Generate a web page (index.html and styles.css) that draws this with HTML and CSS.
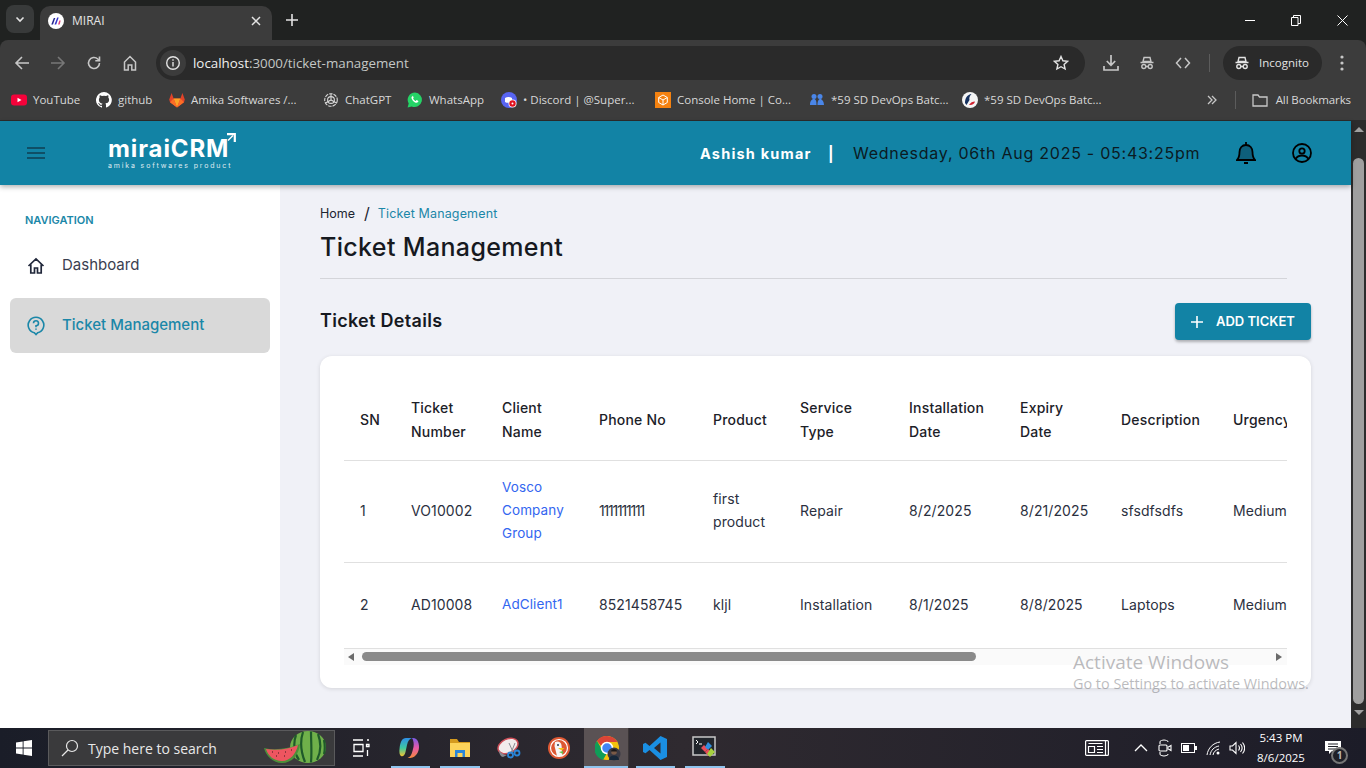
FILE: index.html
```html
<!DOCTYPE html>
<html lang="en">
<head>
    <meta charset="UTF-8">
    <meta name="viewport" content="width=device-width, initial-scale=1.0">
    <title>MIRAI</title>
    <link rel="stylesheet" href="styles.css">
</head>
<body>
    <!-- Browser: tab strip -->
    <div class="tabstrip">
        <div class="tab-search"><svg width="12" height="12" viewBox="0 0 12 12" fill="none" stroke="#e3e3e3" stroke-width="1.6"><path d="M2.5 4.5 6 8l3.500-3.500"/></svg></div>
        <div class="tab">
            <span class="favicon"><svg width="16" height="16" viewBox="0 0 16 16"><circle cx="8" cy="8" r="8" fill="#fff"/><path d="M3.300 11.500 5.800 5h1.500L5 11.500z" fill="#23238f"/><path d="M6.500 11.500 9.200 4.500h1.500L8.200 11.500z" fill="#3535c8"/><path d="M10 11.500l1.300-4h1.400l-1 4z" fill="#e2447a"/></svg></span>
            <span class="tab-title">MIRAI</span>
            <svg class="tab-close" width="10" height="10" viewBox="0 0 10 10" stroke="#e3e3e3" stroke-width="1.5"><path d="m1 1 8 8M9 1 1 9"/></svg>
        </div>
        <svg class="tab-new" width="12" height="12" viewBox="0 0 12 12" stroke="#e3e3e3" stroke-width="1.600"><path d="M6 0v12M0 6h12"/></svg>
        <div class="win-controls">
            <svg width="10" height="10" viewBox="0 0 10 10" stroke="#fff"><path d="M0 5.500h10"/></svg>
            <svg width="10" height="11" viewBox="0 0 10 11" fill="none" stroke="#fff"><path d="M.5 2.500h6.500v8H.5zM2.500 2.500V.5h7v8H7"/></svg>
            <svg width="11" height="11" viewBox="0 0 11 11" stroke="#fff"><path d="m.5.500 10 10M10.500.5l-10 10"/></svg>
        </div>
    </div>

    <!-- Browser: toolbar -->
    <div class="toolbar">
        <svg class="nav-icon" width="16" height="16" viewBox="0 0 16 16" fill="none" stroke="#c7c7c7" stroke-width="1.600"><path d="M15 8H2M8 2 2 8l6 6"/></svg>
        <svg class="nav-icon" width="16" height="16" viewBox="0 0 16 16" fill="none" stroke="#777" stroke-width="1.600"><path d="M1 8h13M8 2l6 6-6 6"/></svg>
        <svg class="nav-icon" width="16" height="16" viewBox="0 0 16 16" fill="none" stroke="#c7c7c7" stroke-width="1.600"><path d="M13.500 8A5.500 5.500 0 1 1 11.800 4l1.700 1.700"/><path d="M13.500 1.500v4.200H9.300"/></svg>
        <svg class="nav-icon" width="16" height="16" viewBox="0 0 16 16" fill="none" stroke="#c7c7c7" stroke-width="1.500"><path d="M2.500 15V7L8 1.500 13.500 7v8h-3.700v-5H6.200v5z"/></svg>
        <div class="omnibox">
            <span class="site-info"><svg width="16" height="16" viewBox="0 0 16 16" fill="none" stroke="#e3e3e3" stroke-width="1.400"><circle cx="8" cy="8" r="6.300"/><path d="M8 7v4.500M8 4.300v1.400"/></svg></span>
            <span class="url"><b>localhost</b>:3000/ticket-management</span>
            <svg class="star" width="16" height="16" viewBox="0 0 16 16" fill="none" stroke="#e3e3e3" stroke-width="1.400"><path d="m8 1.500 1.900 4.300 4.700.5-3.500 3.100 1 4.600L8 11.700l-4.100 2.300 1-4.600L1.400 6.300l4.700-.5z"/></svg>
        </div>
        <svg class="tool-icon" width="16" height="16" viewBox="0 0 16 16" fill="none" stroke="#c7c7c7" stroke-width="1.700"><path d="M8 0v10M3.800 6 8 10.300 12.200 6M1 11v4h14v-4"/></svg>
        <svg class="tool-icon" width="16" height="16" viewBox="0 0 16 16" fill="none" stroke="#c7c7c7" stroke-width="1.400"><path d="M5 2.500h6l1 4H4zM1.500 7.500h13"/><circle cx="4.800" cy="11.500" r="2"/><circle cx="11.200" cy="11.500" r="2"/><path d="M6.800 11.500h2.400"/></svg>
        <svg class="tool-icon code-icon" width="16" height="16" viewBox="0 0 16 16" fill="none" stroke="#c7c7c7" stroke-width="1.500"><path d="M6 3 1.500 8 6 13M10 3l4.500 5-4.500 5"/></svg>
        <span class="tool-sep"></span>
        <div class="incognito">
            <svg width="16" height="16" viewBox="0 0 16 16" fill="none" stroke="#e3e3e3" stroke-width="1.400"><path d="M5 2.500h6l1 4H4zM1.500 7.500h13"/><circle cx="4.800" cy="11.500" r="2"/><circle cx="11.200" cy="11.500" r="2"/><path d="M6.800 11.500h2.400"/></svg>
            <span>Incognito</span>
        </div>
        <svg class="menu-dots" width="4" height="16" viewBox="0 0 4 16" fill="#c7c7c7"><circle cx="2" cy="2" r="1.600"/><circle cx="2" cy="8" r="1.600"/><circle cx="2" cy="14" r="1.600"/></svg>
    </div>

    <!-- Browser: bookmarks -->
    <div class="bookmarks">
        <div class="bm-list">
            <div class="bm"><svg width="16" height="16" viewBox="0 0 16 16"><rect y="2.500" width="16" height="11" rx="3" fill="#f5023a"/><path d="m6.500 5.700 4 2.300-4 2.300z" fill="#fff"/></svg>YouTube</div>
            <div class="bm"><svg width="16" height="16" viewBox="0 0 16 16"><path fill="#fff" d="M8 0a8 8 0 0 0-2.500 15.600c.4.100.5-.2.500-.4v-1.400c-2.200.5-2.700-1-2.700-1-.4-.9-.9-1.200-.9-1.200-.7-.5.100-.5.100-.5.800.1 1.200.8 1.200.8.700 1.200 1.900.9 2.300.7.100-.5.300-.9.500-1.100-1.800-.2-3.600-.9-3.600-4 0-.9.300-1.600.8-2.100-.1-.2-.4-1 .1-2.100 0 0 .7-.2 2.200.8a7.600 7.600 0 0 1 4 0c1.500-1 2.200-.8 2.200-.8.400 1.100.2 1.900.1 2.100.5.600.8 1.300.8 2.100 0 3.100-1.900 3.700-3.700 3.900.3.300.6.800.6 1.500v2.200c0 .2.100.5.600.4A8 8 0 0 0 8 0z"/></svg>github</div>
            <div class="bm"><svg width="16" height="16" viewBox="0 0 16 16"><path fill="#e24329" d="M8 15.500 1 10.200.2 7.500 2.600 1l2 5.500h6.800l2-5.500 2.400 6.500-.8 2.700z"/><path fill="#fca326" d="M8 15.500 4.600 6.500h6.800z"/><path fill="#fc6d26" d="m8 15.500-7-5.300 3.600-3.700zM8 15.500l7-5.300-3.600-3.700z"/></svg>Amika Softwares /...</div>
            <div class="bm"><svg width="16" height="16" viewBox="0 0 16 16" fill="none" stroke="#d8d8d8" stroke-width="1.100"><circle cx="8" cy="8" r="6.300" stroke-dasharray="3.500 1"/><circle cx="8" cy="8" r="3.400"/><path d="M8 1.700v6.300M2.500 11 8 8l5.500 3"/></svg>ChatGPT</div>
            <div class="bm"><svg width="16" height="16" viewBox="0 0 16 16"><path fill="#25d366" d="M8 .5a7.300 7.300 0 0 0-6.300 11L.6 15.500l4.100-1A7.300 7.300 0 1 0 8 .5z"/><path fill="#fff" d="M5.600 4.200c-.3 0-.8.300-1 .9-.3.800 0 2 1.100 3.300 1.200 1.400 2.700 2.300 3.900 2.400.9 0 1.600-.6 1.700-1.200.1-.4.100-.6 0-.7l-1.500-.8c-.2 0-.3 0-.4.100l-.6.700c-.1.100-.2.100-.4 0-.9-.4-1.800-1.200-2.300-2.100-.1-.2 0-.3.100-.4l.4-.6v-.4l-.6-1.400c-.1-.2-.3-.3-.4-.3z"/></svg>WhatsApp</div>
            <div class="bm"><svg width="16" height="16" viewBox="0 0 16 16"><circle cx="8" cy="8" r="8" fill="#5865f2"/><path d="M4 6c2-1.500 5-1.500 7 0v4l-1.500.8H5.500L4 10z" fill="#fff"/><circle cx="11.500" cy="11.500" r="4" fill="#fff"/><circle cx="11.500" cy="11.500" r="3.200" fill="#e0101f"/><circle cx="11.500" cy="11.500" r="1" fill="#fff"/></svg>• Discord | @Super...</div>
            <div class="bm"><svg width="16" height="16" viewBox="0 0 16 16"><rect width="16" height="16" fill="#f58210"/><path d="m8 3 4.300 2.500v5L8 13l-4.300-2.500v-5zM3.700 5.500 8 8l4.300-2.500M8 8v5" fill="none" stroke="#fff" stroke-width="1"/></svg>Console Home | Co...</div>
            <div class="bm"><svg width="16" height="16" viewBox="0 0 16 16" fill="#4a86e8"><circle cx="5" cy="4.500" r="2.500"/><circle cx="11" cy="4.500" r="2.500"/><path d="M1 13c0-3.500 1.500-6 3.800-6S7.500 9.500 7.500 13zM8.500 13c0-3.500 1-6 2.700-6S15 9.500 15 13z"/></svg>*59 SD DevOps Batc...</div>
            <div class="bm"><svg width="16" height="16" viewBox="0 0 16 16"><circle cx="8" cy="8" r="8" fill="#f4f4f4"/><path d="M3 11c0-5 2.500-8.500 6.500-9-2 2-2.500 4-2 6L4.500 13z" fill="#15305e"/><path d="M7 13c1.500-2.500 3.500-3.500 6-3.500-.5 2.500-3 4-6 3.500z" fill="#d0202e"/></svg>*59 SD DevOps Batc...</div>
        </div>
        <svg class="bm-more" width="10" height="10" viewBox="0 0 10 10" fill="none" stroke="#c7c7c7" stroke-width="1.300"><path d="m1 1 4 4-4 4M5 1l4 4-4 4"/></svg>
        <span class="tool-sep bm-sep"></span>
        <div class="bm-all"><svg width="16" height="16" viewBox="0 0 16 16" fill="none" stroke="#c7c7c7" stroke-width="1.300"><path d="M1 3h5l1.500 2H15v9H1z"/></svg>All Bookmarks</div>
    </div>

    <!-- Page -->
    <div class="viewport">
        <div class="app">
            <header class="app-header">
                <svg class="burger" width="18" height="12" viewBox="0 0 18 12" stroke="#0f3f52" stroke-width="1.600"><path d="M0 1h18M0 6h18M0 11h18"/></svg>
                <div class="logo">
                    <div class="logo-name">miraiCRM<svg class="logo-arrow" width="12" height="11" viewBox="0 0 12 11" fill="none" stroke="#fff"><path d="M3 1.200h7.800V9" stroke-width="2.200"/><path d="M4 7.500 9 2.500" stroke-width="1.500"/></svg></div>
                    <div class="logo-sub">amika softwares product</div>
                </div>
                <div class="user-name">Ashish kumar</div>
                <div class="user-sep">|</div>
                <div class="clock">Wednesday, 06th Aug 2025 - 05:43:25pm</div>
                <svg class="bell" width="20" height="24" viewBox="0 0 20 24" fill="#0e5f7b" stroke="#000" stroke-width="1.800"><path d="M1 19h18c-2-2-2.500-3.500-2.500-8 0-4-2.500-7-6.500-7s-6.500 3-6.500 7c0 4.500-.5 6-2.500 8z"/><path d="M10 1v3" /><path d="M8 22h4" stroke-width="2"/></svg>
                <svg class="account" width="20" height="20" viewBox="0 0 20 20" fill="none" stroke="#000" stroke-width="1.800"><circle cx="10" cy="10" r="9"/><circle cx="10" cy="8" r="2.700"/><path d="M3.500 16c1.500-2.500 3.800-3.500 6.500-3.500s5 1 6.500 3.500"/></svg>
            </header>

            <div class="app-body">
                <aside class="sidebar">
                    <div class="nav-title">NAVIGATION</div>
                    <div class="nav-item">
                        <svg width="18" height="18" viewBox="0 0 18 18" fill="none" stroke="#20273a" stroke-width="1.700"><path d="M1.500 9 9 2l7.500 7M3.800 7.500V16h3.700v-5h3v5h3.700V7.500"/></svg>
                        <span>Dashboard</span>
                    </div>
                    <div class="nav-item active">
                        <svg width="18" height="20" viewBox="0 0 18 20" fill="none" stroke="#1b87a8" stroke-width="1.600"><path d="M9 18.500 7.300 16.700A7.800 7.800 0 1 1 10.700 16.700z"/><path d="M6.500 7.200A2.500 2.500 0 1 1 9 9.800v1.400M9 12.500v1.300"/></svg>
                        <span>Ticket Management</span>
                    </div>
                </aside>

                <main class="content">
                    <div class="breadcrumb">
                        <span>Home</span>
                        <span class="crumb-sep">/</span>
                        <span class="crumb-current">Ticket Management</span>
                    </div>
                    <h1 class="page-title">Ticket Management</h1>
                    <div class="section-head">
                        <h2>Ticket Details</h2>
                        <button class="add-btn">
                            <svg width="12" height="12" viewBox="0 0 12 12" stroke="#fff" stroke-width="1.600"><path d="M6 0v12M0 6h12"/></svg>
                            <span>ADD TICKET</span>
                        </button>
                    </div>
                    <div class="card">
                        <div class="table-wrap">
                            <table class="tickets">
                                <colgroup>
                                    <col class="c-sn"><col class="c-num"><col class="c-client"><col class="c-phone"><col class="c-product">
                                    <col class="c-service"><col class="c-install"><col class="c-expiry"><col class="c-desc"><col class="c-urgency">
                                </colgroup>
                                <thead>
                                    <tr>
                                        <th>SN</th><th>Ticket Number</th><th>Client Name</th><th>Phone No</th><th>Product</th>
                                        <th>Service Type</th><th>Installation Date</th><th>Expiry Date</th><th>Description</th><th>Urgency</th>
                                    </tr>
                                </thead>
                                <tbody>
                                    <tr class="row-a">
                                        <td>1</td><td>VO10002</td><td><a class="client-link">Vosco Company Group</a></td><td class="ones">1111111111</td><td>first product</td>
                                        <td>Repair</td><td>8/2/2025</td><td>8/21/2025</td><td>sfsdfsdfs</td><td>Medium</td>
                                    </tr>
                                    <tr class="row-b">
                                        <td>2</td><td>AD10008</td><td><a class="client-link">AdClient1</a></td><td>8521458745</td><td>kljl</td>
                                        <td>Installation</td><td>8/1/2025</td><td>8/8/2025</td><td>Laptops</td><td>Medium</td>
                                    </tr>
                                </tbody>
                            </table>
                            <div class="hscroll">
                                <span class="arrow-left"></span>
                                <div class="hscroll-track"><div class="hscroll-thumb"></div></div>
                                <span class="arrow-right"></span>
                            </div>
                        </div>
                    </div>
                </main>
            </div>

            <div class="watermark">
                <div class="wm-title">Activate Windows</div>
                <div class="wm-sub">Go to Settings to activate Windows.</div>
            </div>
        </div>
        <div class="page-scroll">
            <span class="arrow-up"></span>
            <div class="page-thumb"></div>
            <span class="arrow-down"></span>
        </div>
    </div>

    <!-- Windows taskbar -->
    <div class="taskbar">
        <div class="start"><svg width="16" height="16" viewBox="0 0 18 18" fill="#fff"><path d="M0 2.800 7.500 1.700v6.800H0zM8.500 1.500 18 0v8.500H8.500zM0 9.500h7.500v6.800L0 15.200zM8.500 9.500H18V18l-9.500-1.500z"/></svg></div>
        <div class="search-box">
            <svg width="18" height="18" viewBox="0 0 18 18" fill="none" stroke="#e8e8e8" stroke-width="1.200"><circle cx="11" cy="7" r="5.500"/><path d="M7 11 1 17"/></svg>
            <span>Type here to search</span>
            <svg class="melon" width="64" height="38" viewBox="0 0 64 38">
                <ellipse cx="46" cy="19" rx="18" ry="16" fill="#6fb04a"/>
                <path d="M34 7c-3 8-2 18 3 25M41 4c-3 9-2 20 2 30M49 3.500c0 10 1 20 0 31M56 6c3 8 3 18-1 26M62 12c1 5 1 10 0 14" fill="none" stroke="#1f5a2a" stroke-width="2.200"/>
                <path d="M2 20c12 3 26 0 36-4-1 11-8 19-18 19C11 35 4 28 2 20z" fill="#4d8f3a"/>
                <path d="M4 21c11 2 23 0 32-4-2 9-8 16-16 16C12 33 6 28 4 21z" fill="#ee5560"/>
                <path d="M10 24h1M16 25h1M23 24h1M29 22h1M14 28h1M22 28h1" stroke="#3a1a1a" stroke-width="1"/>
            </svg>
        </div>
        <div class="task-icon"><svg width="18" height="18" viewBox="0 0 18 18" fill="none" stroke="#fff" stroke-width="1.300"><path d="M1 1h10M1 17h10M2 5.500h9v7H2zM15 1h2M14.500 5.500h2.500v2h-2.500zM15.500 11v6"/></svg></div>
        <div class="task-icon open">
            <svg width="22" height="22" viewBox="0 0 22 22">
                <defs>
                    <linearGradient id="cpA" x1="0" y1="0" x2="0" y2="1"><stop offset="0" stop-color="#2f8fe8"/><stop offset=".55" stop-color="#3fc9a0"/><stop offset="1" stop-color="#f3c330"/></linearGradient>
                    <linearGradient id="cpB" x1="0" y1="0" x2="0" y2="1"><stop offset="0" stop-color="#7a5be8"/><stop offset=".5" stop-color="#e85aa8"/><stop offset="1" stop-color="#f58a3a"/></linearGradient>
                </defs>
                <path d="M7 1h6c-3 1-4 3-5 7l-1.500 7c-.6 3-2.500 5-4.500 4C.5 18 0 15 .6 11 1.300 5 3 1 7 1z" fill="url(#cpA)"/>
                <path d="M13 1c3-.4 5 1 6 3.500 2 5 1 11-2.500 14-1.500 2-4 2.500-8 2.500 3-1 4-3.500 5-7l1-4c.6-3 0-7-1.500-9z" fill="url(#cpB)"/>
            </svg>
        </div>
        <div class="task-icon open"><svg width="22" height="22" viewBox="0 0 22 22"><path d="M1 2h7l2 3h11v5H1z" fill="#d49a1e"/><path d="M1 6h20v14H1z" fill="#fcd35a"/><path d="M6 13h10v7h-2.500v-4h-5v4H6z" fill="#2a86d8"/></svg></div>
        <div class="task-icon"><svg width="24" height="22" viewBox="0 0 24 22"><ellipse cx="11" cy="9" rx="10.500" ry="7" transform="rotate(-25 11 9)" fill="#f2ecec" stroke="#d0505a" stroke-width="1.500"/><path d="M2 13c2 4 6 5 8 5l-4 2c-2 0-4-3-4-7z" fill="#8a8a92"/><path d="m12 6 4 9M18 6l-4 10" stroke="#8a8a92" stroke-width="1"/><circle cx="13.500" cy="18" r="2.500" fill="none" stroke="#2a86d8" stroke-width="1.800"/><circle cx="20" cy="16" r="2.500" fill="none" stroke="#2a86d8" stroke-width="1.800"/></svg></div>
        <div class="task-icon"><svg width="22" height="22" viewBox="0 0 22 22"><circle cx="11" cy="11" r="11" fill="#de5833"/><circle cx="11" cy="11" r="8.500" fill="none" stroke="#fff" stroke-width="1.200"/><path d="M7 5c3-1.500 6 0 6.500 3l1 11H9L6.500 9z" fill="#f6f6f6"/><circle cx="10" cy="8" r="1" fill="#2a3a55"/><path d="M10 11h6.500l-3 2.500z" fill="#f5c518"/><path d="M11 15l4-1v3z" fill="#65bc46"/></svg></div>
        <div class="task-icon open current">
            <svg width="30" height="30" viewBox="0 0 30 30">
                <circle cx="12" cy="12" r="12" fill="#f4c20d"/>
                <path d="M12 0a12 12 0 0 1 10.400 6H12a6 6 0 0 0-5.700 4L2 5a12 12 0 0 1 10-5z" fill="#db4437"/>
                <path d="M2 5l5 8.500a6 6 0 0 0 5 3.500L8 24A12 12 0 0 1 2 5z" fill="#0f9d58"/>
                <circle cx="12" cy="12" r="5.500" fill="#4285f4" stroke="#fff" stroke-width="1.500"/>
                <circle cx="19" cy="18" r="6.500" fill="#3a3a44"/>
                <circle cx="19" cy="16" r="2.800" fill="#7a5a46"/>
                <path d="M19 13c-2 0-3 1-3 2.500h6C22 14 21 13 19 13z" fill="#1a1a1a"/>
                <path d="M14 24c0-3 2-4.500 5-4.500s5 1.500 5 4.500z" fill="#16283a"/>
            </svg>
        </div>
        <div class="task-icon open"><svg width="24" height="24" viewBox="0 0 24 24"><path d="M17.500 0 24 3v18l-6.500 3L6.500 14l-4 3.200L0 16V8l2.500-1.200 4 3.200zM17.500 6.500 11 12l6.500 5.500z" fill="#1a8fe3"/></svg></div>
        <div class="task-icon open"><svg width="26" height="24" viewBox="0 0 26 24"><rect x="1" y="1" width="22" height="18" fill="#22262c" stroke="#c8c8c8" stroke-width="1.500"/><path d="m4 4 2 2-2 2M7 8h3" fill="none" stroke="#fff"/><path d="m12 9 4 4-3 3-4-4z" fill="#e84d5b"/><path d="m16 6 4 4-4 4-3-3z" fill="#2f8fe0"/><path d="m13 16 3-3 3 3-3 4z" fill="#e84d5b"/><path d="m19 12 4 4-5 5-3-3z" fill="#a6d13f"/></svg></div>
        <div class="tray">
            <svg class="tray-news" width="24" height="16" viewBox="0 0 24 16" fill="none" stroke="#fff" stroke-width="1.200"><rect x=".6" y=".6" width="22.800" height="14.800" rx="1"/><path d="M3.500 3.500h14M3.500 6.500h6v6h-6zM12 6.500h6M12 9.500h6M12 12.500h6M20.500 1v14"/></svg>
            <svg class="tray-chevron" width="14" height="8" viewBox="0 0 14 8" fill="none" stroke="#fff" stroke-width="1.300"><path d="m1 7 6-6 6 6"/></svg>
            <svg class="tray-item" width="14" height="18" viewBox="0 0 14 18" fill="none" stroke="#fff" stroke-width="1.100"><path d="M2 5V3c0-1 2-2 4-2s4 1 4 2M2 13v2c0 1 2 2 4 2s4-1 4-2"/><rect x="1" y="6" width="8" height="6" rx="1"/><path d="m9.500 8.500 3.500-2v5l-3.500-2"/></svg>
            <svg class="tray-item" width="16" height="10" viewBox="0 0 16 10"><rect x=".5" y=".5" width="13" height="9" fill="none" stroke="#fff"/><rect x="2" y="2" width="6" height="6" fill="#fff"/><rect x="14" y="3" width="2" height="4" fill="#fff"/></svg>
            <svg class="tray-item tray-wifi" width="16" height="16" viewBox="0 0 16 16" fill="none" stroke="#fff" stroke-width="1"><path d="M1 15C2 8 7 3 14 2M4 15c1-5 4-8 9-9M7 15c.5-3 2.500-5 6-6"/><circle cx="12" cy="13" r="1.500" fill="#fff" stroke="none"/></svg>
            <svg class="tray-item tray-volume" width="16" height="14" viewBox="0 0 16 14" fill="none" stroke="#fff" stroke-width="1.100"><path d="M1 5h2.500L7 1.500v11L3.500 9H1zM9.500 4.500c1.200 1.500 1.200 3.500 0 5M11.500 3c2 2.500 2 5.500 0 8M13.500 1.500c2.800 3.500 2.800 7.500 0 11"/></svg>
            <div class="tray-clock"><div>5:43 PM</div><div>8/6/2025</div></div>
            <div class="tray-notify">
                <svg width="16" height="14" viewBox="0 0 16 14"><path d="M0 0h16v10H7l-3 3v-3H0z" fill="#fff"/><path d="M3 3h10M3 5.500h10M3 8h7" stroke="#1f2028"/></svg>
                <span class="notify-badge">1</span>
            </div>
        </div>
    </div>
</body>
</html>
```

FILE: styles.css
```css
* {
    box-sizing: border-box;
}

body {
    margin: 0;
    height: 100vh;
    display: flex;
    flex-direction: column;
    overflow: hidden;
    font-family: "Inter", "Liberation Sans", sans-serif;
    background-color: #202221;
}

svg {
    display: block;
    flex: none;
}

/* Browser chrome */
.tabstrip {
    height: 40px;
    flex: none;
    display: flex;
    align-items: center;
    padding-left: 6px;
    background-color: #202221;
}

.tab-search {
    width: 28px;
    height: 28px;
    margin-top: -2px;
    border-radius: 8px;
    background-color: #383a3a;
    display: flex;
    align-items: center;
    justify-content: center;
}

.tab {
    width: 232px;
    height: 34px;
    margin-top: 6px;
    margin-left: 6px;
    padding: 0 8px 5px 8px;
    border-radius: 10px 10px 0 0;
    background-color: #3c3c3c;
    display: flex;
    align-items: center;
    color: #e3e3e3;
    font-family: "Open Sans", sans-serif;
    font-size: 12px;
}

.tab-title {
    margin-left: 8px;
    flex: 1;
}

.tab-close {
    margin-right: 3px;
}

.tab-new {
    margin-left: 14px;
}

.win-controls {
    margin-left: auto;
    display: flex;
    align-items: center;
    gap: 36px;
    padding-right: 18px;
}

.toolbar {
    height: 45px;
    flex: none;
    display: flex;
    align-items: center;
    padding-left: 14px;
    background-color: #3c3c3c;
    border-radius: 8px 8px 0 0;
}

.nav-icon {
    margin-right: 20px;
}

.nav-icon:nth-child(4) {
    margin-right: 18px;
}

.omnibox {
    width: 929px;
    height: 34px;
    border-radius: 17px;
    background-color: #2a2a2a;
    display: flex;
    align-items: center;
    padding-left: 4px;
    margin-right: 18px;
}

.site-info {
    width: 26px;
    height: 26px;
    border-radius: 50%;
    background-color: #3c3c3c;
    display: flex;
    align-items: center;
    justify-content: center;
}

.url {
    margin-left: 7px;
    flex: 1;
    color: #c4c7c5;
    font-family: "Open Sans", sans-serif;
    font-size: 13.35px;
}

.url b {
    color: #f0f0f0;
    font-weight: 400;
}

.star {
    margin-right: 16px;
}

.tool-icon {
    margin-right: 20px;
}

.code-icon {
    margin-right: 18px;
}

.tool-sep {
    width: 1px;
    height: 18px;
    background-color: #5c5c5c;
    margin-right: 13px;
}

.incognito {
    width: 99px;
    height: 34px;
    border-radius: 17px;
    background-color: #2a2a2a;
    display: flex;
    align-items: center;
    gap: 9px;
    padding-left: 11px;
    color: #e3e3e3;
    font-family: "Open Sans", sans-serif;
    font-size: 11.5px;
}

.menu-dots {
    margin-left: 18px;
}

.bookmarks {
    height: 35px;
    flex: none;
    display: flex;
    align-items: center;
    padding: 0 15px 6px 11px;
    background-color: #3c3c3c;
    color: #d8d8d8;
    font-family: "Open Sans", sans-serif;
    font-size: 11.5px;
}

.bm-list {
    width: 1121px;
    display: grid;
    grid-template-columns: 85px 73px 154px 84px 94px 154px 154px 153px 1fr;
}

.bm {
    display: flex;
    align-items: center;
    gap: 6px;
    white-space: nowrap;
}

.bm-more {
    margin-left: 75px;
}

.bm-sep {
    margin: 0 16px 0 18px;
}

.bm-all {
    display: flex;
    align-items: center;
    gap: 8px;
    white-space: nowrap;
    letter-spacing: -0.1px;
}

/* Page */
.viewport {
    flex: 1;
    min-height: 0;
    display: flex;
    border-top: 1px solid #2c2c2c;
}

.app {
    flex: 1;
    min-width: 0;
    position: relative;
    display: flex;
    flex-direction: column;
    background-color: #f0f1f7;
}

.app-header {
    height: 64px;
    flex: none;
    display: flex;
    align-items: center;
    padding-left: 27px;
    background-color: #1283a5;
    box-shadow: 0 2px 5px rgba(0, 0, 0, 0.3);
    position: relative;
    z-index: 1;
}

.logo {
    margin-left: 63px;
    width: 130px;
    color: #fff;
}

.logo-name {
    display: flex;
    font-size: 24px;
    font-weight: 700;
    line-height: 24px;
    letter-spacing: 0.9px;
}

.logo-arrow {
    margin-top: -4px;
    margin-left: -5px;
}

.logo-sub {
    font-size: 7px;
    letter-spacing: 1.85px;
    line-height: 9px;
    white-space: nowrap;
    opacity: 0.85;
}

.user-name {
    margin-left: 462px;
    width: 113px;
    color: #fff;
    font-size: 14.5px;
    font-weight: 700;
    letter-spacing: 1.2px;
    white-space: nowrap;
}

.user-sep {
    width: 40px;
    color: #fff;
    font-weight: 700;
    font-size: 15px;
    padding-left: 15px;
}

.clock {
    width: 347px;
    color: #0b1a22;
    font-size: 16px;
    letter-spacing: 0.75px;
    white-space: nowrap;
}

.bell {
    margin-left: 36px;
}

.account {
    margin-left: 36px;
}

.app-body {
    flex: 1;
    min-height: 0;
    display: flex;
}

.sidebar {
    width: 280px;
    flex: none;
    padding: 28px 10px 0;
    background-color: #fff;
}

.nav-title {
    padding-left: 15px;
    margin-bottom: 11px;
    color: #1b87a8;
    font-size: 11px;
    font-weight: 600;
    line-height: 14px;
}

.nav-item {
    height: 55px;
    margin-bottom: 5px;
    padding-left: 17px;
    display: flex;
    align-items: center;
    gap: 17px;
    border-radius: 6px;
    color: #3a4050;
    font-size: 15px;
}

.nav-item span {
    padding-bottom: 2px;
}

.nav-item.active {
    background-color: #d9d9d9;
    color: #1b87a8;
    font-weight: 500;
}

.content {
    flex: 1;
    min-width: 0;
    padding: 20px 40px 0;
}

.breadcrumb {
    display: flex;
    align-items: center;
    height: 18px;
    padding-bottom: 2px;
    font-size: 12.5px;
    color: #1c2430;
}

.crumb-sep {
    margin: 0 8px 0 9px;
    font-size: 16px;
}

.crumb-current {
    color: #1b87a8;
    letter-spacing: 0.15px;
}

.page-title {
    margin: 7px 24px 0 0;
    height: 49px;
    border-bottom: 1px solid #d4d5da;
    color: #16191f;
    font-size: 25px;
    font-weight: 500;
    line-height: 34px;
    letter-spacing: 0.35px;
}

.section-head {
    margin-top: 24px;
    display: flex;
    align-items: center;
    justify-content: space-between;
}

.section-head h2 {
    margin: 0 0 2px;
    color: #16191f;
    font-size: 18px;
    font-weight: 600;
    line-height: 35px;
    letter-spacing: 0.3px;
}

.add-btn {
    width: 136px;
    height: 37px;
    border: 0;
    border-radius: 4px;
    background-color: #1283a5;
    box-shadow: 0 2px 3px rgba(0, 0, 0, 0.28);
    color: #fff;
    font-family: inherit;
    font-size: 13px;
    font-weight: 600;
    display: flex;
    align-items: center;
    gap: 13px;
    padding-left: 16px;
    white-space: nowrap;
}

.add-btn span {
    padding-bottom: 2px;
}

.card {
    margin-top: 16px;
    height: 332px;
    padding: 28px 24px 0;
    border-radius: 12px;
    background-color: #fff;
    box-shadow: 0 1px 4px rgba(0, 0, 0, 0.12);
}

.table-wrap {
    overflow: hidden;
}

.tickets {
    width: 1063px;
    table-layout: fixed;
    border-collapse: collapse;
    font-size: 14px;
    color: #2b3040;
}

.c-sn { width: 51px; }
.c-num { width: 91px; }
.c-client { width: 97px; }
.c-phone { width: 114px; }
.c-product { width: 87px; }
.c-service { width: 109px; }
.c-install { width: 111px; }
.c-expiry { width: 101px; }
.c-desc { width: 112px; }
.c-urgency { width: 190px; }

.tickets th {
    height: 76px;
    padding: 0 16px 3px;
    text-align: left;
    font-weight: 500;
    line-height: 24px;
    letter-spacing: 0.2px;
    color: #1c2128;
    border-bottom: 1px solid #e0e0e0;
}

.tickets td {
    padding: 0 16px 2px;
    line-height: 23px;
    letter-spacing: 0.1px;
    border-bottom: 1px solid #e0e0e0;
}

.tickets td.ones {
    letter-spacing: -1.2px;
}

.row-a td {
    height: 102px;
}

.row-b td {
    height: 86px;
}

.client-link {
    color: #3366f0;
    font-size: 13.5px;
    display: block;
}

.hscroll {
    width: 943px;
    height: 16px;
    display: flex;
    align-items: center;
    background-color: #fafafa;
}

.hscroll-track {
    flex: 1;
    padding-left: 8px;
}

.hscroll-thumb {
    width: 614px;
    height: 9px;
    border-radius: 5px;
    background-color: #8a8a8a;
}

.arrow-left {
    margin-left: 4px;
    border: 4px solid transparent;
    border-left: 0;
    border-right: 6px solid #6b6b6b;
}

.arrow-right {
    margin-right: 5px;
    border: 4px solid transparent;
    border-right: 0;
    border-left: 6px solid #6b6b6b;
}

.watermark {
    position: absolute;
    left: 1073px;
    top: 529px;
    color: rgba(120, 120, 125, 0.5);
    font-family: "Open Sans", sans-serif;
    white-space: nowrap;
    pointer-events: none;
}

.wm-title {
    font-size: 19px;
    line-height: 24px;
}

.wm-sub {
    font-size: 14.4px;
    line-height: 20px;
}

.page-scroll {
    width: 15px;
    flex: none;
    display: flex;
    flex-direction: column;
    align-items: center;
    background-color: #2c2c2c;
}

.arrow-up {
    margin-top: 6px;
    border: 5px solid transparent;
    border-top: 0;
    border-bottom: 5px solid #a0a0a0;
}

.page-thumb {
    width: 11px;
    height: 546px;
    margin-top: 26px;
    border-radius: 6px;
    background-color: #9f9f9f;
}

.arrow-down {
    margin-top: 6px;
    border: 5px solid transparent;
    border-bottom: 0;
    border-top: 5px solid #a0a0a0;
}

/* Windows taskbar */
.taskbar {
    height: 40px;
    flex: none;
    display: flex;
    align-items: center;
    background: linear-gradient(90deg, #1a1d28, #2f2a30 50%, #1c1c28);
    color: #fff;
}

.start {
    width: 48px;
    display: flex;
    justify-content: center;
}

.search-box {
    width: 287px;
    height: 36px;
    display: flex;
    align-items: center;
    padding-left: 12px;
    background-color: #3a3a3c;
    border: 1px solid #5a5a5c;
    position: relative;
    color: #e8e8e8;
    font-family: "Open Sans", sans-serif;
    font-size: 14px;
}

.search-box span {
    margin-left: 9px;
}

.melon {
    position: absolute;
    left: 213px;
    top: -3px;
}

.task-icon {
    width: 49.500px;
    height: 40px;
    display: flex;
    align-items: center;
    justify-content: center;
    position: relative;
}

.search-box + .task-icon {
    margin-left: 1px;
}

.task-icon.open::after {
    content: "";
    position: absolute;
    left: 5px;
    right: 5px;
    bottom: 0;
    height: 2px;
    background-color: #8fc4ee;
}

.task-icon.current {
    width: 45px;
    margin-right: 2px;
    background-color: #5a5254;
    border-right: 1px solid #3a3536;
}

.task-icon.current svg {
    margin: 6px 0 0 8px;
}

.task-icon.current::after {
    left: 0;
    right: 0;
}

.tray {
    margin-left: auto;
    display: flex;
    align-items: center;
    height: 40px;
}

.tray-chevron {
    margin-left: 25px;
    margin-right: 10px;
}

.tray-item {
    margin-right: 9px;
}

.tray-wifi {
    margin-right: 7px;
}

.tray-volume {
    margin-right: 0;
}

.tray-clock {
    width: 62px;
    margin-left: 5px;
    text-align: center;
    font-family: "Open Sans", sans-serif;
    font-size: 11.500px;
    line-height: 20px;
}

.tray-notify {
    width: 46px;
    margin-left: -2px;
    margin-right: 10px;
    position: relative;
    display: flex;
    justify-content: center;
}

.notify-badge {
    position: absolute;
    right: 8px;
    top: 6px;
    width: 17px;
    height: 17px;
    border-radius: 50%;
    background-color: #1f2028;
    border: 2px solid #777;
    color: #bbb;
    font-family: "Open Sans", sans-serif;
    font-size: 10px;
    font-weight: 700;
    line-height: 13px;
    text-align: center;
}
```
